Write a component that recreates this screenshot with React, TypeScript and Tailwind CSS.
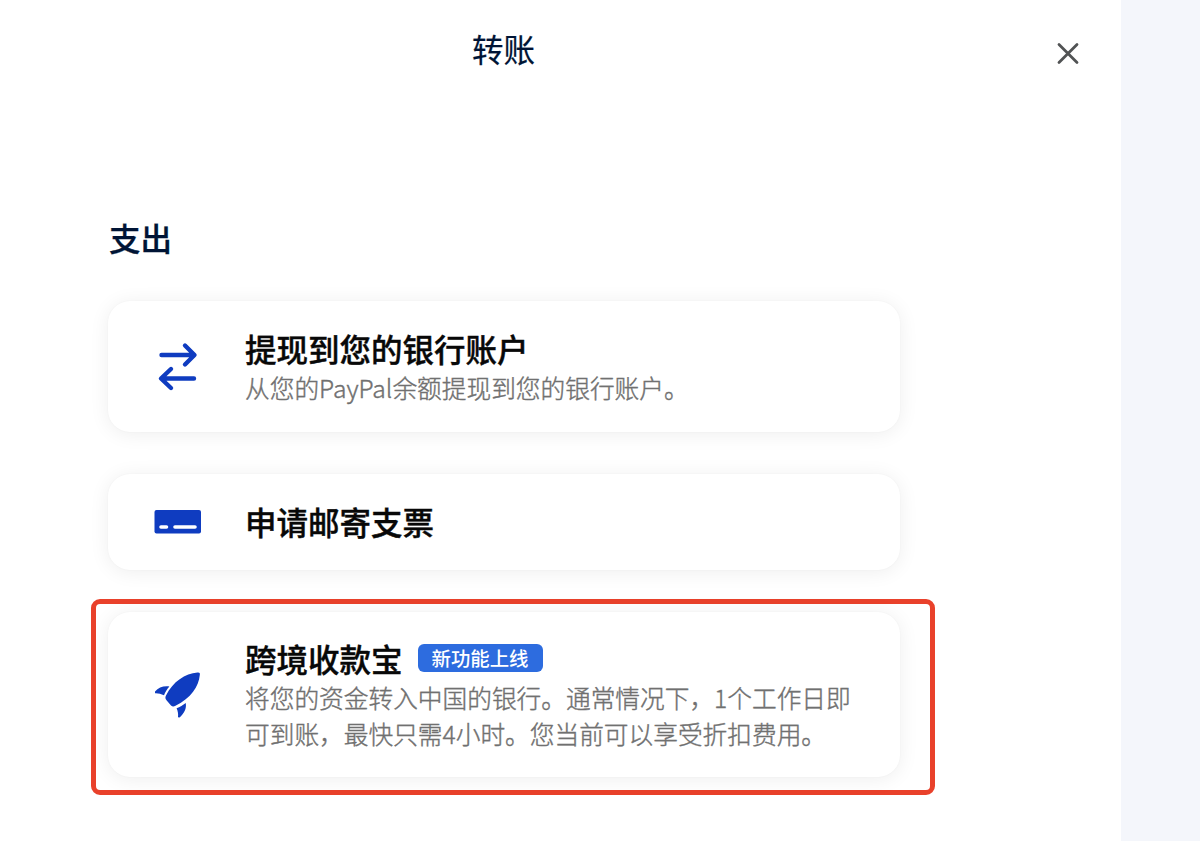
import type { ReactNode } from "react";

interface OptionCardProps {
	icon: ReactNode;
	title: string;
	badge?: string;
	lines?: string[];
	className: string;
}

function TransferIcon() {
	return (
		<svg className="mb-[2px]" width="48" height="52" viewBox="0 0 48 52" fill="none" stroke="#0f3cc0" strokeWidth="4.4" strokeLinecap="round" strokeLinejoin="round">
			<path d="M8.5 15H41M32 5.5L41.5 15L32 24.5" />
			<path d="M41 38.5H8.5M18 29L8 38.5L18 48" />
		</svg>
	);
}

function CheckIcon() {
	return (
		<svg width="48" height="26" viewBox="0 0 48 26">
			<rect x="1.5" y="1" width="46.5" height="23.5" rx="2" fill="#0f3cc0" />
			<path d="M8 18h5.5M22 18h20" stroke="#fff" strokeWidth="3.6" strokeLinecap="round" />
		</svg>
	);
}

function RocketIcon() {
	return (
		<svg width="48" height="48" viewBox="0 0 48 48" fill="#0f3cc0">
			<path d="M44.5 1.5C46.5 1.3 47.2 2 46.8 4C45.8 15.5 38 27 22.5 34.8C20.5 36 19.3 35.7 18 34.4L13.5 29.2C12.2 27.6 12.1 26.3 13 24.5C20 10.5 32 2.5 44.5 1.5Z" />
			<path d="M2 20.5C5.5 16.2 10.5 14.7 16.4 15.4C14 18 12.2 21 11 24.2C8 22.8 5 22 2 22.2Z" />
			<path d="M32.7 32C33.8 37.5 31.2 42.3 26.5 46.5L25 46.2C25.4 43 24.8 40 23.6 37.3C27 36 30 34.3 32.7 32Z" />
		</svg>
	);
}

function OptionCard({ icon, title, badge, lines = [], className }: OptionCardProps) {
	return (
		<li className={`flex items-center rounded-[22px] bg-white shadow-[0_2px_20px_rgba(0,0,0,0.07),0_0_2px_rgba(0,0,0,0.04)] ${className}`}>
			<div className="flex w-[137px] shrink-0 justify-center">{icon}</div>
			<div>
				<div className="mb-[2px] flex items-center">
					<h3 className="text-[31.5px] leading-[40px] font-medium text-[#080808] [-webkit-text-stroke:0.4px]">{title}</h3>
					{badge && (
						<span className="ml-[15px] flex h-[28px] w-[125px] items-center justify-center rounded-[6px] bg-[#2d6cdf] pb-px text-[19.4px] font-medium text-white">
							{badge}
						</span>
					)}
				</div>
				{lines.map((line) => (
					<p key={line} className="text-[24.7px] leading-[35.5px] font-light whitespace-nowrap text-[#707070] [-webkit-text-stroke:0.4px]">
						{line}
					</p>
				))}
			</div>
		</li>
	);
}

export default function App() {
	return (
		<div lang="zh-CN" className="flex h-[841px] w-[1200px] overflow-hidden bg-[#f4f6fb] font-['Noto_Sans_CJK_SC',sans-serif]">
			<main className="w-[1121px] shrink-0 bg-white">
				<header className="flex h-[106px] pt-[26px] pl-[472px]">
					<h1 className="text-[31.5px] leading-[44px] text-[#001435] [-webkit-text-stroke:0.2px]">转账</h1>
					<button className="mt-[16px] ml-[521px] h-[24px] w-[24px]" aria-label="关闭">
						<svg width="24" height="24" viewBox="0 0 24 24" stroke="#515354" strokeWidth="2.8" strokeLinecap="round">
							<path d="M3 2.6L21 20.6M21 2.6L3 20.6" />
						</svg>
					</button>
				</header>
				<section className="pt-[109px]">
					<h2 className="ml-[109px] text-[31.5px] leading-[44px] font-medium text-[#001435] [-webkit-text-stroke:0.3px]">支出</h2>
					<ul className="mt-[42px]">
						<OptionCard
							className="ml-[108px] h-[131px] w-[792px]"
							icon={<TransferIcon />}
							title="提现到您的银行账户"
							lines={["从您的PayPal余额提现到您的银行账户。"]}
						/>
						<OptionCard className="mt-[42px] ml-[108px] h-[96px] w-[792px]" icon={<CheckIcon />} title="申请邮寄支票" />
						<li className="mt-[29px] ml-[91px] h-[196px] w-[844px] rounded-[9px] border-[5px] border-[#e9412b] pt-[8px] pl-[12px]">
							<ul>
								<OptionCard
									className="h-[165px] w-[792px]"
									icon={<RocketIcon />}
									title="跨境收款宝"
									badge="新功能上线"
									lines={["将您的资金转入中国的银行。通常情况下，1个工作日即", "可到账，最快只需4小时。您当前可以享受折扣费用。"]}
								/>
							</ul>
						</li>
					</ul>
				</section>
			</main>
		</div>
	);
}
